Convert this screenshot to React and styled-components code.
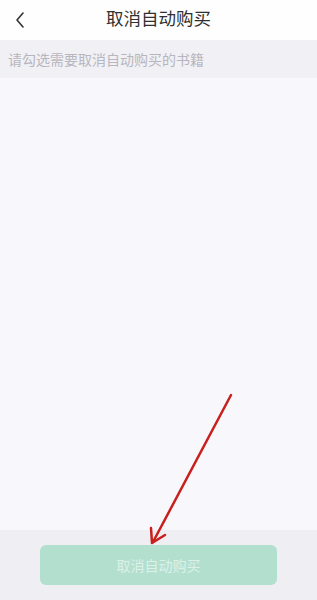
import React from "react";
import styled, { createGlobalStyle } from "styled-components";

const Global = createGlobalStyle`
  html, body { margin: 0; padding: 0; }
  body { font-family: "Noto Sans CJK SC", "Noto Sans", sans-serif; background: #f8f7fc; }
`;

const Page = styled.div`
  position: relative;
  width: 317px;
  height: 600px;
  display: flex;
  flex-direction: column;
  background: #f8f7fc;
  overflow: hidden;
`;

const Header = styled.div`
  height: 40px;
  flex: none;
  background: #fefefe;
  display: grid;
  grid-template-columns: 40px 1fr 40px;
  align-items: center;
`;

const Back = styled.div`
  display: flex;
  align-items: center;
  justify-content: center;
`;

const Title = styled.div`
  text-align: center;
  font-size: 17.5px;
  color: #303030;
  line-height: 1;
  margin-top: -4px;
`;

const Hint = styled.div`
  height: 38px;
  flex: none;
  background: #f1f0f5;
  display: flex;
  align-items: center;
  padding-left: 8px;
  font-size: 14px;
  color: #b7b6be;
`;

const Content = styled.div`
  flex: 1;
  background: #f8f7fc;
`;

const Footer = styled.div`
  height: 70px;
  flex: none;
  background: #efeef3;
  display: flex;
  justify-content: center;
  padding-top: 15px;
  box-sizing: border-box;
`;

const Button = styled.div`
  width: 237px;
  height: 40px;
  border-radius: 6px;
  background: #b3dfcf;
  color: #dcf1ea;
  font-size: 14px;
  display: flex;
  align-items: center;
  justify-content: center;
`;

const Arrow = styled.svg`
  position: absolute;
  left: 0;
  top: 0;
  pointer-events: none;
`;

export default function App() {
  return (
    <Page>
      <Global />
      <Header>
        <Back>
          <svg width="12" height="18" viewBox="0 0 12 18">
            <path d="M9 2 L3 9 L9 16" fill="none" stroke="#333" strokeWidth="1.6" strokeLinecap="round" strokeLinejoin="round" />
          </svg>
        </Back>
        <Title>取消自动购买</Title>
        <div />
      </Header>
      <Hint>请勾选需要取消自动购买的书籍</Hint>
      <Content />
      <Footer>
        <Button>取消自动购买</Button>
      </Footer>
      <Arrow width="317" height="600" viewBox="0 0 317 600">
        <path d="M231 395 L153 542" stroke="#c8201c" strokeWidth="2.5" strokeLinecap="round" fill="none" />
        <path d="M151 528 L152 543 L165 535" stroke="#c8201c" strokeWidth="2.5" strokeLinecap="round" strokeLinejoin="round" fill="none" />
      </Arrow>
    </Page>
  );
}
